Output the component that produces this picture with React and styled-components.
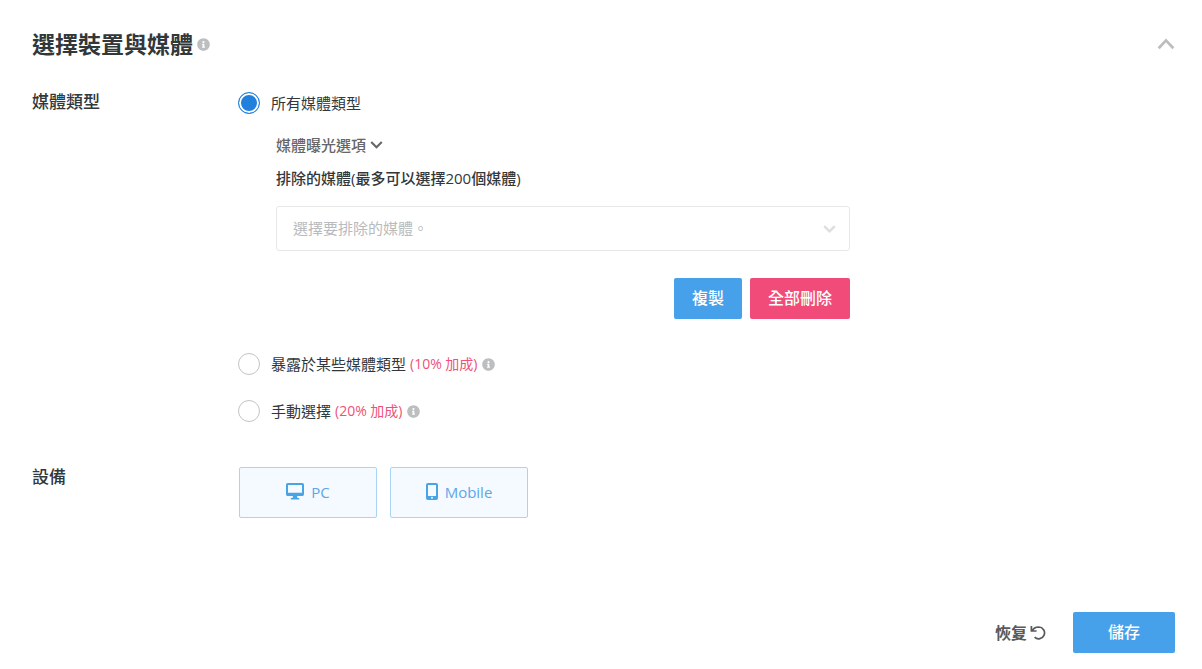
import React, { useState } from "react";
import styled, { createGlobalStyle } from "styled-components";
import { FaInfoCircle } from "react-icons/fa";

const GlobalStyle = createGlobalStyle`
  *, *::before, *::after { box-sizing: border-box; }
  body {
    margin: 0;
    background: #fff;
    color: #32373a;
    font-family: "Open Sans", "Noto Sans CJK TC", sans-serif;
    font-size: 15px;
    line-height: 24px;
  }
  button, select, input { font: inherit; }
`;

const Panel = styled.section`
  padding: 28px 27px 16px 32px;
`;

const Header = styled.header`
  display: flex;
  align-items: center;
  justify-content: space-between;
`;

const Title = styled.h2`
  display: flex;
  align-items: center;
  gap: 4px;
  margin: 0;
  font-size: 23px;
  line-height: 32px;
  font-weight: 700;
`;

const InfoIcon = styled(FaInfoCircle)`
  flex: none;
  width: 13px;
  height: 13px;
  color: #bcbec0;
`;

const IconButton = styled.button`
  display: flex;
  padding: 0;
  border: 0;
  background: none;
  color: #bdbdbd;
  cursor: pointer;
`;

const Field = styled.div`
  display: grid;
  grid-template-columns: 206px minmax(0, 1fr);
  margin-top: ${(p) => p.$gap}px;
`;

const FieldLabel = styled.h3`
  margin: 0;
  font-size: 17px;
  line-height: 24px;
  font-weight: 500;
`;

const Options = styled.div`
  max-width: 612px;
  padding-top: 1px;
`;

const RadioLabel = styled.label`
  display: flex;
  align-items: center;
  width: fit-content;
  gap: 4px;
  margin-top: ${(p) => p.$gap || 0}px;
  cursor: pointer;
`;

const Radio = styled.input`
  appearance: none;
  flex: none;
  width: 22px;
  height: 22px;
  margin: 0 7px 0 0;
  border: 1px solid #c4c4c4;
  border-radius: 50%;
  background: #fff;
  &:checked {
    border-color: #2684de;
    background: #2080dc;
    box-shadow: inset 0 0 0 2px #fff;
  }
`;

const Surcharge = styled.span`
  color: #f0507a;
  font-size: 14px;
`;

const Nested = styled.div`
  padding-left: 38px;
`;

const Toggle = styled.button`
  display: flex;
  align-items: center;
  gap: 4px;
  margin-top: 18px;
  padding: 0;
  border: 0;
  background: none;
  color: #666;
  font-weight: 500;
  cursor: pointer;
`;

const SelectLabel = styled.label`
  display: block;
  margin: 9px 0 16px;
  font-weight: 500;
`;

const SelectWrap = styled.div`
  display: grid;
  align-items: center;
  > * { grid-area: 1 / 1; }
  > svg {
    justify-self: end;
    margin-right: 14px;
    color: #dedede;
    pointer-events: none;
  }
`;

const Select = styled.select`
  appearance: none;
  width: 100%;
  height: 45px;
  padding: 0 36px 2px 16px;
  border: 1px solid #e8e8e8;
  border-radius: 3px;
  background: #fff;
  color: #b8bbbd;
`;

const Actions = styled.div`
  display: flex;
  justify-content: flex-end;
  gap: 8px;
  margin-top: 27px;
`;

const tones = { blue: "#46a0ea", pink: "#f14c79" };

const Button = styled.button`
  height: 41px;
  padding: 0 ${(p) => (p.$wide ? 35 : 18)}px 2px;
  border: 0;
  border-radius: 2px;
  background: ${(p) => tones[p.$tone]};
  color: #fff;
  font-size: 16px;
  font-weight: 500;
  cursor: pointer;
`;

const Devices = styled.div`
  display: flex;
  gap: 13px;
  padding: 2px 0 0 1px;
`;

const DeviceButton = styled.button`
  display: flex;
  align-items: center;
  justify-content: center;
  gap: 7px;
  width: 138px;
  height: 51px;
  padding: 0 0 2px;
  border: 1px solid #a9d5f4;
  border-radius: 2px;
  background: #f4faff;
  color: #5ea6e8;
  font-weight: 500;
  cursor: pointer;
  svg { color: #4aa3e4; }
`;

const Footer = styled.footer`
  display: flex;
  align-items: center;
  justify-content: flex-end;
  gap: 27px;
  margin-top: 94px;
`;

const ResetButton = styled(IconButton)`
  align-items: center;
  gap: 3px;
  color: #58595b;
  font-size: 16px;
  font-weight: 700;
`;

function Chevron({ up, width = 13, stroke = 2 }) {
  return (
    <svg width={width} height={width * 0.75} viewBox="0 0 16 12" fill="none" stroke="currentColor" strokeWidth={stroke} aria-hidden="true">
      <path d={up ? "M1.5 10 8 3l6.5 7" : "M1.5 2.5 8 9l6.5-6.5"} />
    </svg>
  );
}

function UndoIcon() {
  return (
    <svg width="16" height="16" viewBox="0 0 16 16" fill="none" stroke="currentColor" strokeWidth="1.7" aria-hidden="true">
      <path d="M1.4 1v5h5.2M1.6 5.8 4.4 3.2C5.6 2.3 7 2 8.8 2a5.9 5.9 0 1 1-4.2 10.2" />
    </svg>
  );
}

function DesktopIcon() {
  return (
    <svg width="18" height="17" viewBox="0 0 18 17" fill="currentColor" aria-hidden="true">
      <path fillRule="evenodd" d="M1.8 0h14.4C17.2 0 18 .8 18 1.8v9.4c0 1-.8 1.8-1.8 1.8H11l.5 2h1.7v1.6H4.8V15h1.7l.5-2H1.8C.8 13 0 12.2 0 11.2V1.8C0 .8.8 0 1.8 0ZM2 2v7.8h14V2Z" />
    </svg>
  );
}

function MobileIcon() {
  return (
    <svg width="12" height="17" viewBox="0 0 12 17" fill="currentColor" aria-hidden="true">
      <path fillRule="evenodd" d="M2 0h8a2 2 0 0 1 2 2v13a2 2 0 0 1-2 2H2a2 2 0 0 1-2-2V2a2 2 0 0 1 2-2Zm0 2v11h8V2Zm4 11.8a1 1 0 1 0 0 2 1 1 0 0 0 0-2Z" />
    </svg>
  );
}

export default function App() {
  const [media, setMedia] = useState("all");
  const radio = (value) => ({
    type: "radio",
    name: "media",
    checked: media === value,
    onChange: () => setMedia(value),
  });

  return (
    <>
      <GlobalStyle />
      <Panel>
        <Header>
          <Title>選擇裝置與媒體<InfoIcon /></Title>
          <IconButton type="button" aria-label="收合">
            <Chevron up width={18} stroke={2.4} />
          </IconButton>
        </Header>

        <Field $gap={30}>
          <FieldLabel>媒體類型</FieldLabel>
          <Options>
            <RadioLabel>
              <Radio {...radio("all")} />
              所有媒體類型
            </RadioLabel>
            <Nested>
              <Toggle type="button">
                媒體曝光選項
                <Chevron stroke={2.5} />
              </Toggle>
              <SelectLabel htmlFor="excluded">排除的媒體(最多可以選擇200個媒體)</SelectLabel>
              <SelectWrap>
                <Select id="excluded" defaultValue="">
                  <option value="">選擇要排除的媒體。</option>
                </Select>
                <Chevron stroke={3} />
              </SelectWrap>
              <Actions>
                <Button type="button" $tone="blue">複製</Button>
                <Button type="button" $tone="pink">全部刪除</Button>
              </Actions>
            </Nested>
            <RadioLabel $gap={33}>
              <Radio {...radio("some")} />
              暴露於某些媒體類型
              <Surcharge>(10% 加成)</Surcharge>
              <InfoIcon />
            </RadioLabel>
            <RadioLabel $gap={23}>
              <Radio {...radio("manual")} />
              手動選擇
              <Surcharge>(20% 加成)</Surcharge>
              <InfoIcon />
            </RadioLabel>
          </Options>
        </Field>

        <Field $gap={42}>
          <FieldLabel>設備</FieldLabel>
          <Devices>
            <DeviceButton type="button"><DesktopIcon />PC</DeviceButton>
            <DeviceButton type="button"><MobileIcon />Mobile</DeviceButton>
          </Devices>
        </Field>

        <Footer>
          <ResetButton type="button">恢复<UndoIcon /></ResetButton>
          <Button type="button" $tone="blue" $wide>儲存</Button>
        </Footer>
      </Panel>
    </>
  );
}
